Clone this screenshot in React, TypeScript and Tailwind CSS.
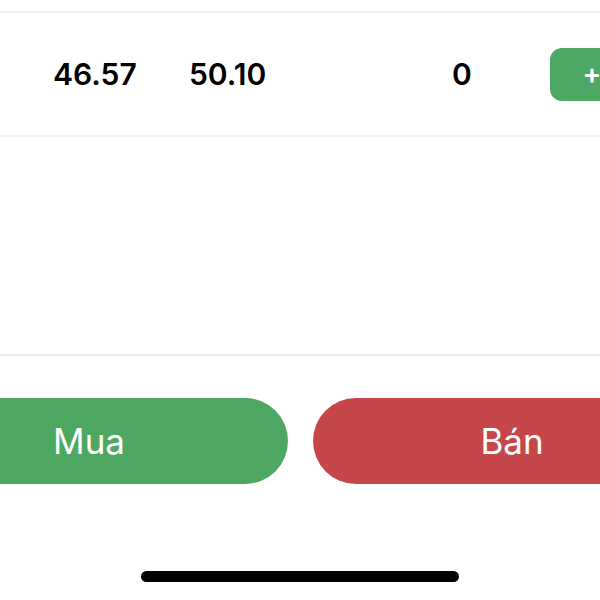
const cellClass = "shrink-0 text-[30px] font-semibold leading-none text-black";

function OrderRow() {
  return (
    <div className="mt-[11px] flex h-[126px] items-center border-y-2 border-[#f1f1f1]">
      <span className={`${cellClass} ml-[53px] w-[136px]`}>46.57</span>
      <span className={`${cellClass} w-[263px]`}>50.10</span>
      <span className={`${cellClass} w-[98px]`}>0</span>
      <button className="flex h-[53px] w-[84px] shrink-0 items-center justify-center rounded-[12px] bg-[#4ca862] text-[28px] font-semibold leading-none text-white">
        +
      </button>
    </div>
  );
}

export default function App() {
  return (
    <div
      className="relative flex h-[600px] w-[600px] flex-col overflow-hidden bg-white"
      style={{ fontFamily: "Inter, 'Liberation Sans', sans-serif" }}
    >
      <OrderRow />

      <div className="mt-[217px] h-[2px] w-full shrink-0 bg-[#ececec]" />

      <div className="-ml-[110px] mt-[42px] flex shrink-0 gap-[25px]">
        <button className="flex h-[86px] w-[398px] shrink-0 items-center justify-center rounded-full bg-[#4ea862] text-[35px] font-normal text-white">
          Mua
        </button>
        <button className="flex h-[86px] w-[398px] shrink-0 items-center justify-center rounded-full bg-[#c6474a] text-[35px] font-normal text-white">
          Bán
        </button>
      </div>

      <div className="mt-[87px] flex shrink-0 justify-center">
        <div className="h-[11px] w-[318px] rounded-full bg-black" />
      </div>
    </div>
  );
}
